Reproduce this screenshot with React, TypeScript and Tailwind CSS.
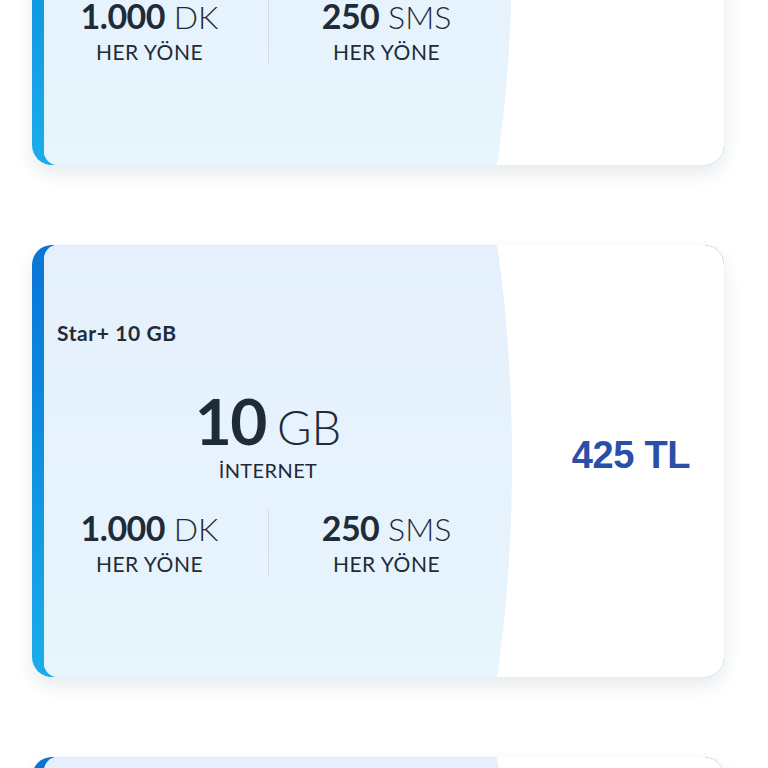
import React from 'react'

interface Plan {
  name: string
  gb: string
  minutes: string
  sms: string
  price: string
}

const plans: Plan[] = [
  { name: 'Star+ 5 GB', gb: '5', minutes: '1.000', sms: '250', price: '375 TL' },
  { name: 'Star+ 10 GB', gb: '10', minutes: '1.000', sms: '250', price: '425 TL' },
  { name: 'Star+ 15 GB', gb: '15', minutes: '1.000', sms: '250', price: '475 TL' },
]

const PlanCard = ({ plan }: { plan: Plan }) => {
  return (
    <div className="ml-8 w-[692px] h-[432px] shrink-0 rounded-[20px] overflow-hidden bg-gradient-to-b from-[#0a74d6] to-[#1badeb] pl-3 shadow-[0_8px_18px_rgba(20,40,70,0.10)]">
      <div className="relative h-full rounded-l-[14px] overflow-hidden bg-white flex">
        <div className="relative w-[468px] h-full">
          <div className="absolute left-0 right-0 top-[-184px] bottom-[-184px] rounded-r-[95px_400px] bg-gradient-to-b from-[#e3eefb] via-[#e6f2fc] to-[#e7f7fe]" />
          <div className="relative w-[448px] flex flex-col text-[#1f2b38]">
            <p className="pl-[13px] pt-[76px] text-[21px] font-bold leading-6 tracking-[0.6px]">{plan.name}</p>
            <div className="mt-[44px] flex items-baseline justify-center gap-[11px] leading-none">
              <span className="text-[64px] font-bold tracking-[-1.5px]">{plan.gb}</span>
              <span className="text-[47px] font-light">GB</span>
            </div>
            <p className="mt-[5px] text-center text-[20px] leading-6 tracking-[0.4px]">İNTERNET</p>
            <div className="mt-[28px] flex items-center justify-center gap-[18px]">
              <div className="w-[200px] flex flex-col items-center">
                <p className="leading-[34px] whitespace-nowrap">
                  <span className="text-[34px] font-bold tracking-[-0.5px]">{plan.minutes}</span>
                  <span className="text-[32px] font-light"> DK</span>
                </p>
                <p className="text-[21px] leading-6 tracking-[0.5px]">HER YÖNE</p>
              </div>
              <div className="w-px h-[66px] bg-[#d3dee8]" />
              <div className="w-[200px] flex flex-col items-center">
                <p className="leading-[34px] whitespace-nowrap">
                  <span className="text-[34px] font-bold tracking-[-0.5px]">{plan.sms}</span>
                  <span className="text-[32px] font-light"> SMS</span>
                </p>
                <p className="text-[21px] leading-6 tracking-[0.5px]">HER YÖNE</p>
              </div>
            </div>
          </div>
        </div>
        <div className="flex-1 flex items-center justify-center pl-[26px] pb-[12px]">
          <span className="font-['Liberation_Sans',Arial,sans-serif] text-[38px] font-bold text-[#2a4fa6] tracking-[-0.3px]">
            {plan.price}
          </span>
        </div>
      </div>
    </div>
  )
}

export default function App() {
  return (
    <div className="w-[768px] h-[768px] overflow-hidden bg-white font-['Lato','Noto_Sans',sans-serif]">
      <div className="mt-[-267px] flex flex-col gap-20">
        {plans.map((p) => (
          <PlanCard key={p.name} plan={p} />
        ))}
      </div>
    </div>
  )
}
